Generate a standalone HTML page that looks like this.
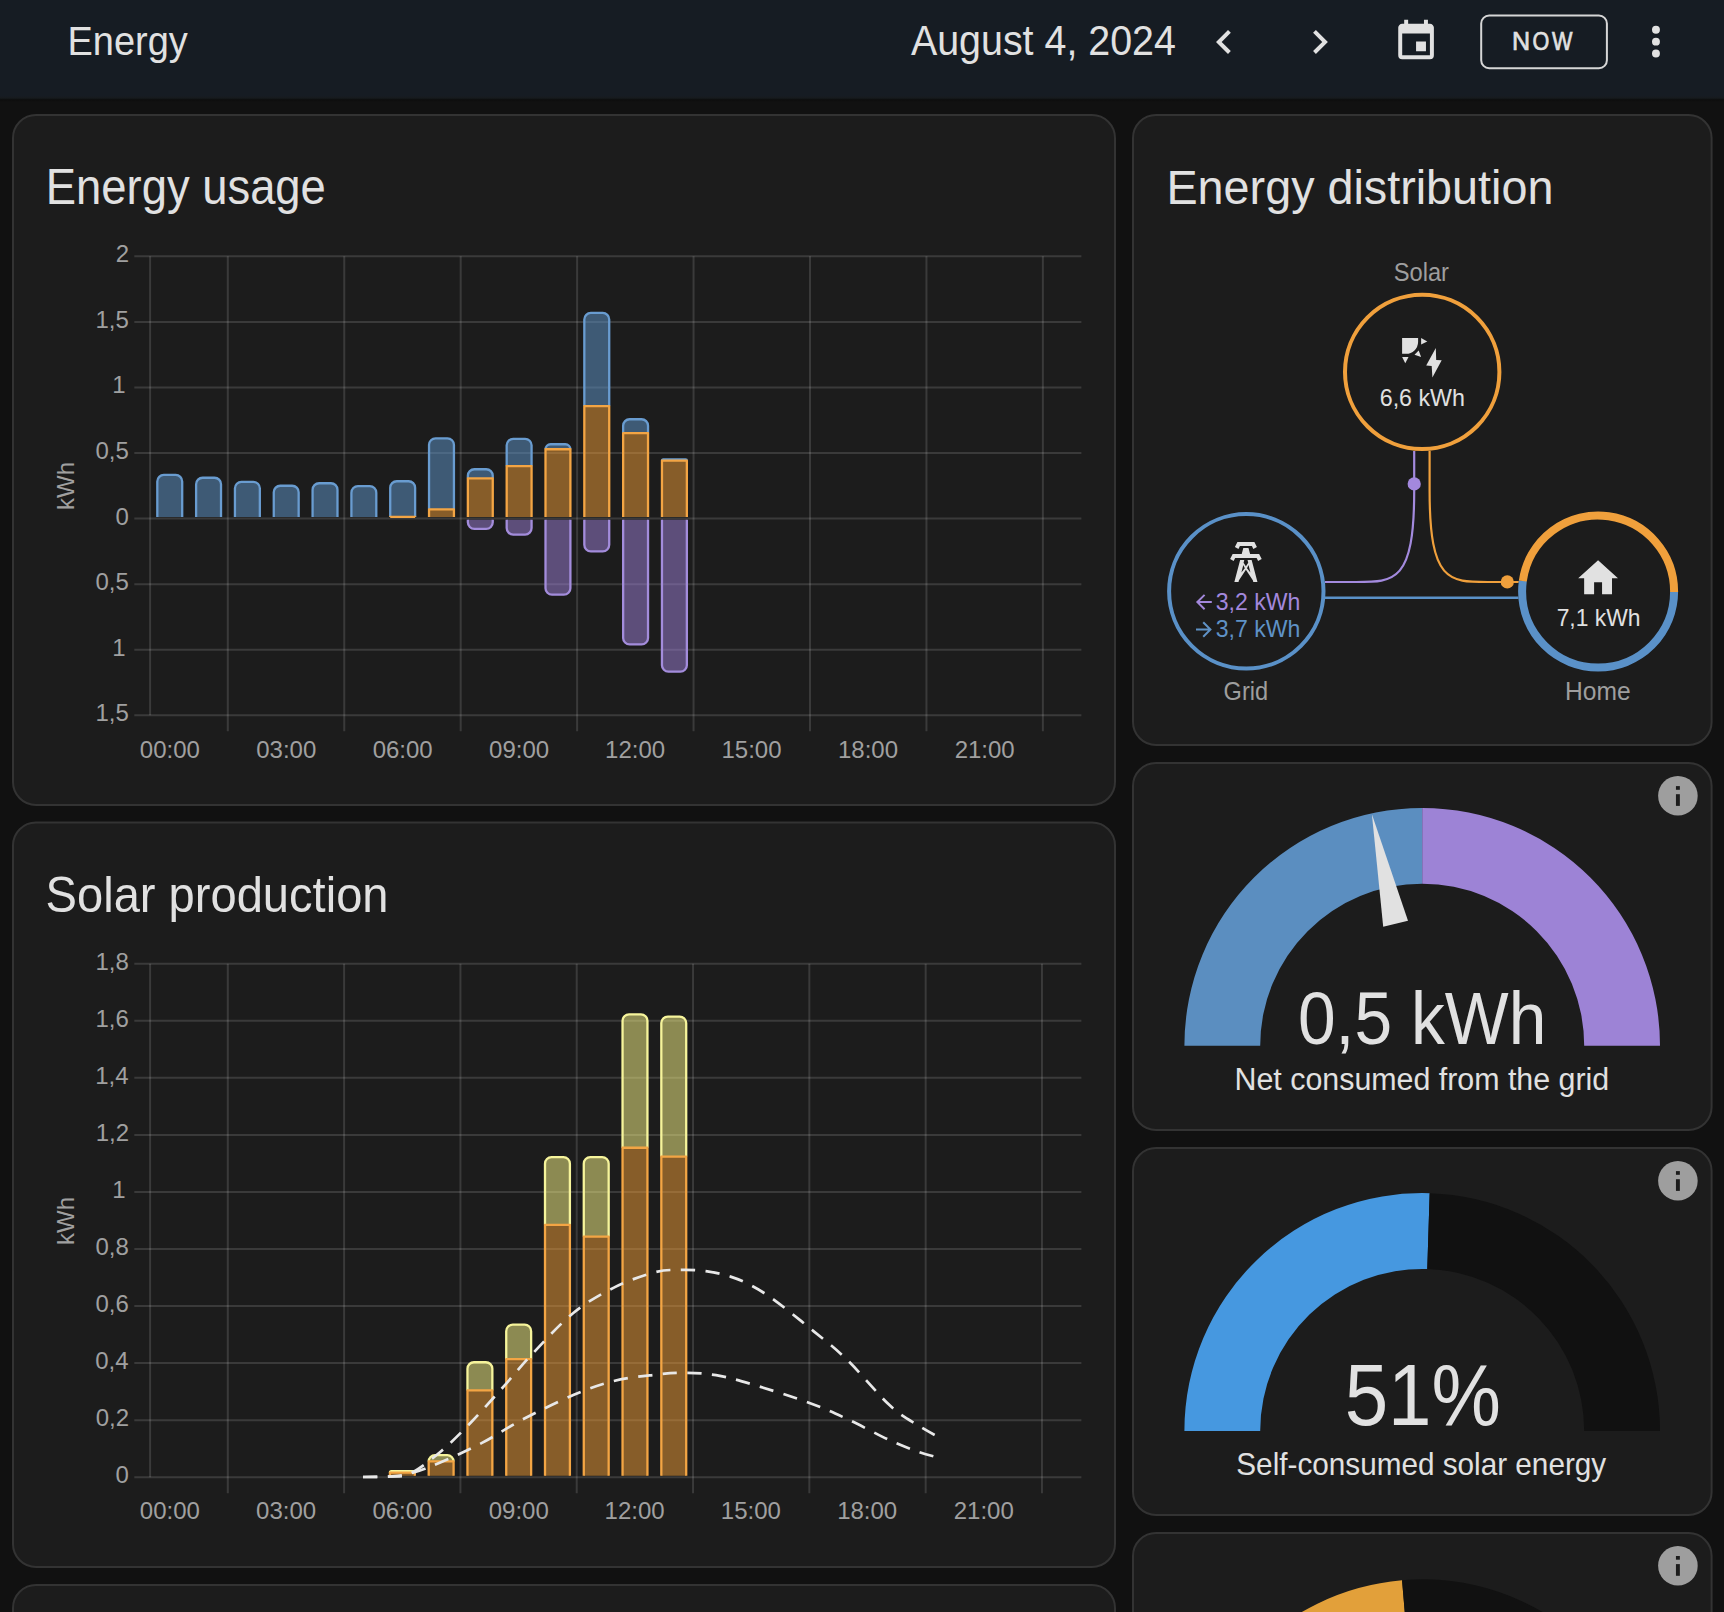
<!DOCTYPE html><html><head><meta charset="utf-8"><title>Energy</title><style>html,body{margin:0;padding:0;background:#111111;overflow:hidden;width:1724px;height:1612px}svg{display:block;font-family:'Liberation Sans', sans-serif}</style></head><body>
<svg width="1724" height="1612" viewBox="0 0 1724 1612">
<defs><linearGradient id="hsh" x1="0" y1="0" x2="0" y2="1"><stop offset="0" stop-color="#000" stop-opacity="0.25"/><stop offset="1" stop-color="#000" stop-opacity="0"/></linearGradient><linearGradient id="hgr" x1="0" y1="0" x2="0" y2="1"><stop offset="0" stop-color="#161c23"/><stop offset="0.5" stop-color="#171b1e"/><stop offset="1" stop-color="#0f1213"/></linearGradient></defs>
<rect x="0" y="0" width="1724" height="1612" fill="#111111"/>
<rect x="0" y="0" width="1724" height="96" fill="#161c23"/>
<rect x="0" y="96" width="1724" height="3.5" fill="url(#hgr)"/>
<rect x="0" y="99.5" width="1724" height="3" fill="url(#hsh)"/>
<g transform="translate(1200,17.9) scale(2)" fill="#e1e1e1"><path d="M15.41,16.58L10.83,12L15.41,7.41L14,6L8,12L14,18L15.41,16.58Z"/></g>
<g transform="translate(1295.9,17.9) scale(2)" fill="#e1e1e1"><path d="M8.59,16.58L13.17,12L8.59,7.41L10,6L16,12L10,18L8.59,16.58Z"/></g>
<g transform="translate(1392.3,17.7) scale(1.98)" fill="#e1e1e1"><path d="M19,19H5V8H19M16,1V3H8V1H6V3H5C3.89,3 3,3.89 3,5V19A2,2 0 0,0 5,21H19A2,2 0 0,0 21,19V5C21,3.89 20.1,3 19,3H18V1M17,12H12V17H17V12Z"/></g>
<rect x="1481.2" y="15.5" width="125.7" height="52.7" rx="8" ry="8" fill="none" stroke="#d6d6d6" stroke-width="2"/>
<g transform="translate(1632.2,17.9) scale(1.98)" fill="#e1e1e1"><path d="M12,16A2,2 0 0,1 14,18A2,2 0 0,1 12,20A2,2 0 0,1 10,18A2,2 0 0,1 12,16M12,10A2,2 0 0,1 14,12A2,2 0 0,1 12,14A2,2 0 0,1 10,12A2,2 0 0,1 12,10M12,4A2,2 0 0,1 14,6A2,2 0 0,1 12,8A2,2 0 0,1 10,6A2,2 0 0,1 12,4Z"/></g>
<rect x="13.0" y="115.0" width="1102.0" height="690.0" rx="23" ry="23" fill="#1c1c1c" stroke="#333333" stroke-width="2"/>
<rect x="13.0" y="822.5" width="1102.0" height="744.5" rx="23" ry="23" fill="#1c1c1c" stroke="#333333" stroke-width="2"/>
<rect x="13.0" y="1585.0" width="1102.0" height="115.0" rx="23" ry="23" fill="#1c1c1c" stroke="#333333" stroke-width="2"/>
<rect x="1133.0" y="115.0" width="578.6" height="630.0" rx="23" ry="23" fill="#1c1c1c" stroke="#333333" stroke-width="2"/>
<rect x="1133.0" y="763.0" width="578.6" height="367.0" rx="23" ry="23" fill="#1c1c1c" stroke="#333333" stroke-width="2"/>
<rect x="1133.0" y="1148.0" width="578.6" height="367.0" rx="23" ry="23" fill="#1c1c1c" stroke="#333333" stroke-width="2"/>
<rect x="1133.0" y="1533.0" width="578.6" height="167.0" rx="23" ry="23" fill="#1c1c1c" stroke="#333333" stroke-width="2"/>
<line x1="134.3" y1="256.32" x2="1081.4" y2="256.32" stroke="rgba(255,255,255,0.135)" stroke-width="2"/>
<line x1="134.3" y1="321.89" x2="1081.4" y2="321.89" stroke="rgba(255,255,255,0.135)" stroke-width="2"/>
<line x1="134.3" y1="387.46" x2="1081.4" y2="387.46" stroke="rgba(255,255,255,0.135)" stroke-width="2"/>
<line x1="134.3" y1="453.03" x2="1081.4" y2="453.03" stroke="rgba(255,255,255,0.135)" stroke-width="2"/>
<line x1="134.3" y1="518.60" x2="1081.4" y2="518.60" stroke="rgba(255,255,255,0.135)" stroke-width="2"/>
<line x1="134.3" y1="584.17" x2="1081.4" y2="584.17" stroke="rgba(255,255,255,0.135)" stroke-width="2"/>
<line x1="134.3" y1="649.74" x2="1081.4" y2="649.74" stroke="rgba(255,255,255,0.135)" stroke-width="2"/>
<line x1="134.3" y1="715.31" x2="1081.4" y2="715.31" stroke="rgba(255,255,255,0.135)" stroke-width="2"/>
<line x1="150.1" y1="256.32" x2="150.1" y2="715.31" stroke="rgba(255,255,255,0.135)" stroke-width="2"/>
<line x1="227.80" y1="256.32" x2="227.80" y2="731.31" stroke="rgba(255,255,255,0.135)" stroke-width="2"/>
<line x1="344.24" y1="256.32" x2="344.24" y2="731.31" stroke="rgba(255,255,255,0.135)" stroke-width="2"/>
<line x1="460.68" y1="256.32" x2="460.68" y2="731.31" stroke="rgba(255,255,255,0.135)" stroke-width="2"/>
<line x1="577.12" y1="256.32" x2="577.12" y2="731.31" stroke="rgba(255,255,255,0.135)" stroke-width="2"/>
<line x1="693.56" y1="256.32" x2="693.56" y2="731.31" stroke="rgba(255,255,255,0.135)" stroke-width="2"/>
<line x1="810.00" y1="256.32" x2="810.00" y2="731.31" stroke="rgba(255,255,255,0.135)" stroke-width="2"/>
<line x1="926.44" y1="256.32" x2="926.44" y2="731.31" stroke="rgba(255,255,255,0.135)" stroke-width="2"/>
<line x1="1042.88" y1="256.32" x2="1042.88" y2="731.31" stroke="rgba(255,255,255,0.135)" stroke-width="2"/>
<line x1="134.3" y1="1477.20" x2="1081.4" y2="1477.20" stroke="rgba(255,255,255,0.135)" stroke-width="2"/>
<line x1="134.3" y1="1420.15" x2="1081.4" y2="1420.15" stroke="rgba(255,255,255,0.135)" stroke-width="2"/>
<line x1="134.3" y1="1363.10" x2="1081.4" y2="1363.10" stroke="rgba(255,255,255,0.135)" stroke-width="2"/>
<line x1="134.3" y1="1306.05" x2="1081.4" y2="1306.05" stroke="rgba(255,255,255,0.135)" stroke-width="2"/>
<line x1="134.3" y1="1249.00" x2="1081.4" y2="1249.00" stroke="rgba(255,255,255,0.135)" stroke-width="2"/>
<line x1="134.3" y1="1191.95" x2="1081.4" y2="1191.95" stroke="rgba(255,255,255,0.135)" stroke-width="2"/>
<line x1="134.3" y1="1134.90" x2="1081.4" y2="1134.90" stroke="rgba(255,255,255,0.135)" stroke-width="2"/>
<line x1="134.3" y1="1077.85" x2="1081.4" y2="1077.85" stroke="rgba(255,255,255,0.135)" stroke-width="2"/>
<line x1="134.3" y1="1020.80" x2="1081.4" y2="1020.80" stroke="rgba(255,255,255,0.135)" stroke-width="2"/>
<line x1="134.3" y1="963.75" x2="1081.4" y2="963.75" stroke="rgba(255,255,255,0.135)" stroke-width="2"/>
<line x1="150.1" y1="963.75" x2="150.1" y2="1477.20" stroke="rgba(255,255,255,0.135)" stroke-width="2"/>
<line x1="227.80" y1="963.75" x2="227.80" y2="1493.20" stroke="rgba(255,255,255,0.135)" stroke-width="2"/>
<line x1="344.11" y1="963.75" x2="344.11" y2="1493.20" stroke="rgba(255,255,255,0.135)" stroke-width="2"/>
<line x1="460.42" y1="963.75" x2="460.42" y2="1493.20" stroke="rgba(255,255,255,0.135)" stroke-width="2"/>
<line x1="576.73" y1="963.75" x2="576.73" y2="1493.20" stroke="rgba(255,255,255,0.135)" stroke-width="2"/>
<line x1="693.04" y1="963.75" x2="693.04" y2="1493.20" stroke="rgba(255,255,255,0.135)" stroke-width="2"/>
<line x1="809.35" y1="963.75" x2="809.35" y2="1493.20" stroke="rgba(255,255,255,0.135)" stroke-width="2"/>
<line x1="925.66" y1="963.75" x2="925.66" y2="1493.20" stroke="rgba(255,255,255,0.135)" stroke-width="2"/>
<line x1="1041.97" y1="963.75" x2="1041.97" y2="1493.20" stroke="rgba(255,255,255,0.135)" stroke-width="2"/>
<path d="M157.30,517.00 V481.45 A6.50,6.50 0 0 1 163.80,474.95 H175.70 A6.50,6.50 0 0 1 182.20,481.45 V517.00Z" fill="rgba(91,142,192,0.55)" stroke="none"/>
<path d="M157.30,517.00 V481.45 A6.50,6.50 0 0 1 163.80,474.95 H175.70 A6.50,6.50 0 0 1 182.20,481.45 V517.00" fill="none" stroke="#699cd0" stroke-width="2.3" stroke-linejoin="round"/>
<path d="M196.12,517.00 V484.25 A6.50,6.50 0 0 1 202.62,477.75 H214.52 A6.50,6.50 0 0 1 221.02,484.25 V517.00Z" fill="rgba(91,142,192,0.55)" stroke="none"/>
<path d="M196.12,517.00 V484.25 A6.50,6.50 0 0 1 202.62,477.75 H214.52 A6.50,6.50 0 0 1 221.02,484.25 V517.00" fill="none" stroke="#699cd0" stroke-width="2.3" stroke-linejoin="round"/>
<path d="M234.94,517.00 V488.35 A6.50,6.50 0 0 1 241.44,481.85 H253.34 A6.50,6.50 0 0 1 259.84,488.35 V517.00Z" fill="rgba(91,142,192,0.55)" stroke="none"/>
<path d="M234.94,517.00 V488.35 A6.50,6.50 0 0 1 241.44,481.85 H253.34 A6.50,6.50 0 0 1 259.84,488.35 V517.00" fill="none" stroke="#699cd0" stroke-width="2.3" stroke-linejoin="round"/>
<path d="M273.76,517.00 V492.25 A6.50,6.50 0 0 1 280.26,485.75 H292.16 A6.50,6.50 0 0 1 298.66,492.25 V517.00Z" fill="rgba(91,142,192,0.55)" stroke="none"/>
<path d="M273.76,517.00 V492.25 A6.50,6.50 0 0 1 280.26,485.75 H292.16 A6.50,6.50 0 0 1 298.66,492.25 V517.00" fill="none" stroke="#699cd0" stroke-width="2.3" stroke-linejoin="round"/>
<path d="M312.58,517.00 V489.75 A6.50,6.50 0 0 1 319.08,483.25 H330.98 A6.50,6.50 0 0 1 337.48,489.75 V517.00Z" fill="rgba(91,142,192,0.55)" stroke="none"/>
<path d="M312.58,517.00 V489.75 A6.50,6.50 0 0 1 319.08,483.25 H330.98 A6.50,6.50 0 0 1 337.48,489.75 V517.00" fill="none" stroke="#699cd0" stroke-width="2.3" stroke-linejoin="round"/>
<path d="M351.40,517.00 V492.65 A6.50,6.50 0 0 1 357.90,486.15 H369.80 A6.50,6.50 0 0 1 376.30,492.65 V517.00Z" fill="rgba(91,142,192,0.55)" stroke="none"/>
<path d="M351.40,517.00 V492.65 A6.50,6.50 0 0 1 357.90,486.15 H369.80 A6.50,6.50 0 0 1 376.30,492.65 V517.00" fill="none" stroke="#699cd0" stroke-width="2.3" stroke-linejoin="round"/>
<path d="M390.22,516.95 V487.75 A6.50,6.50 0 0 1 396.72,481.25 H408.62 A6.50,6.50 0 0 1 415.12,487.75 V516.95Z" fill="rgba(91,142,192,0.55)" stroke="none"/>
<path d="M390.22,516.95 V487.75 A6.50,6.50 0 0 1 396.72,481.25 H408.62 A6.50,6.50 0 0 1 415.12,487.75 V516.95" fill="none" stroke="#699cd0" stroke-width="2.3" stroke-linejoin="round"/>
<path d="M390.22,517.00 V516.95 H415.12 V517.00Z" fill="rgba(242,157,53,0.50)" stroke="none"/>
<path d="M390.22,517.00 V516.95 H415.12 V517.00" fill="none" stroke="#f3a544" stroke-width="2.3" stroke-linejoin="round"/>
<path d="M429.04,509.35 V444.85 A6.50,6.50 0 0 1 435.54,438.35 H447.44 A6.50,6.50 0 0 1 453.94,444.85 V509.35Z" fill="rgba(91,142,192,0.55)" stroke="none"/>
<path d="M429.04,509.35 V444.85 A6.50,6.50 0 0 1 435.54,438.35 H447.44 A6.50,6.50 0 0 1 453.94,444.85 V509.35" fill="none" stroke="#699cd0" stroke-width="2.3" stroke-linejoin="round"/>
<path d="M429.04,517.00 V509.35 H453.94 V517.00Z" fill="rgba(242,157,53,0.50)" stroke="none"/>
<path d="M429.04,517.00 V509.35 H453.94 V517.00" fill="none" stroke="#f3a544" stroke-width="2.3" stroke-linejoin="round"/>
<path d="M467.86,478.35 V475.75 A6.50,6.50 0 0 1 474.36,469.25 H486.26 A6.50,6.50 0 0 1 492.76,475.75 V478.35Z" fill="rgba(91,142,192,0.55)" stroke="none"/>
<path d="M467.86,478.35 V475.75 A6.50,6.50 0 0 1 474.36,469.25 H486.26 A6.50,6.50 0 0 1 492.76,475.75 V478.35" fill="none" stroke="#699cd0" stroke-width="2.3" stroke-linejoin="round"/>
<path d="M467.86,517.00 V478.35 H492.76 V517.00Z" fill="rgba(242,157,53,0.50)" stroke="none"/>
<path d="M467.86,517.00 V478.35 H492.76 V517.00" fill="none" stroke="#f3a544" stroke-width="2.3" stroke-linejoin="round"/>
<path d="M467.86,519.80 V522.35 A6.50,6.50 0 0 0 474.36,528.85 H486.26 A6.50,6.50 0 0 0 492.76,522.35 V519.80Z" fill="rgba(157,128,216,0.50)"/>
<path d="M467.86,519.80 V522.35 A6.50,6.50 0 0 0 474.36,528.85 H486.26 A6.50,6.50 0 0 0 492.76,522.35 V519.80" fill="none" stroke="#a38cdb" stroke-width="2.3"/>
<path d="M506.68,466.15 V445.35 A6.50,6.50 0 0 1 513.18,438.85 H525.08 A6.50,6.50 0 0 1 531.58,445.35 V466.15Z" fill="rgba(91,142,192,0.55)" stroke="none"/>
<path d="M506.68,466.15 V445.35 A6.50,6.50 0 0 1 513.18,438.85 H525.08 A6.50,6.50 0 0 1 531.58,445.35 V466.15" fill="none" stroke="#699cd0" stroke-width="2.3" stroke-linejoin="round"/>
<path d="M506.68,517.00 V466.15 H531.58 V517.00Z" fill="rgba(242,157,53,0.50)" stroke="none"/>
<path d="M506.68,517.00 V466.15 H531.58 V517.00" fill="none" stroke="#f3a544" stroke-width="2.3" stroke-linejoin="round"/>
<path d="M506.68,519.80 V528.05 A6.50,6.50 0 0 0 513.18,534.55 H525.08 A6.50,6.50 0 0 0 531.58,528.05 V519.80Z" fill="rgba(157,128,216,0.50)"/>
<path d="M506.68,519.80 V528.05 A6.50,6.50 0 0 0 513.18,534.55 H525.08 A6.50,6.50 0 0 0 531.58,528.05 V519.80" fill="none" stroke="#a38cdb" stroke-width="2.3"/>
<path d="M545.50,449.25 V449.25 A5.00,5.00 0 0 1 550.50,444.25 H565.40 A5.00,5.00 0 0 1 570.40,449.25 V449.25Z" fill="rgba(91,142,192,0.55)" stroke="none"/>
<path d="M545.50,449.25 V449.25 A5.00,5.00 0 0 1 550.50,444.25 H565.40 A5.00,5.00 0 0 1 570.40,449.25 V449.25" fill="none" stroke="#699cd0" stroke-width="2.3" stroke-linejoin="round"/>
<path d="M545.50,517.00 V449.25 H570.40 V517.00Z" fill="rgba(242,157,53,0.50)" stroke="none"/>
<path d="M545.50,517.00 V449.25 H570.40 V517.00" fill="none" stroke="#f3a544" stroke-width="2.3" stroke-linejoin="round"/>
<path d="M545.50,519.80 V588.15 A6.50,6.50 0 0 0 552.00,594.65 H563.90 A6.50,6.50 0 0 0 570.40,588.15 V519.80Z" fill="rgba(157,128,216,0.50)"/>
<path d="M545.50,519.80 V588.15 A6.50,6.50 0 0 0 552.00,594.65 H563.90 A6.50,6.50 0 0 0 570.40,588.15 V519.80" fill="none" stroke="#a38cdb" stroke-width="2.3"/>
<path d="M584.32,406.05 V319.45 A6.50,6.50 0 0 1 590.82,312.95 H602.72 A6.50,6.50 0 0 1 609.22,319.45 V406.05Z" fill="rgba(91,142,192,0.55)" stroke="none"/>
<path d="M584.32,406.05 V319.45 A6.50,6.50 0 0 1 590.82,312.95 H602.72 A6.50,6.50 0 0 1 609.22,319.45 V406.05" fill="none" stroke="#699cd0" stroke-width="2.3" stroke-linejoin="round"/>
<path d="M584.32,517.00 V406.05 H609.22 V517.00Z" fill="rgba(242,157,53,0.50)" stroke="none"/>
<path d="M584.32,517.00 V406.05 H609.22 V517.00" fill="none" stroke="#f3a544" stroke-width="2.3" stroke-linejoin="round"/>
<path d="M584.32,519.80 V544.85 A6.50,6.50 0 0 0 590.82,551.35 H602.72 A6.50,6.50 0 0 0 609.22,544.85 V519.80Z" fill="rgba(157,128,216,0.50)"/>
<path d="M584.32,519.80 V544.85 A6.50,6.50 0 0 0 590.82,551.35 H602.72 A6.50,6.50 0 0 0 609.22,544.85 V519.80" fill="none" stroke="#a38cdb" stroke-width="2.3"/>
<path d="M623.14,433.15 V425.75 A6.50,6.50 0 0 1 629.64,419.25 H641.54 A6.50,6.50 0 0 1 648.04,425.75 V433.15Z" fill="rgba(91,142,192,0.55)" stroke="none"/>
<path d="M623.14,433.15 V425.75 A6.50,6.50 0 0 1 629.64,419.25 H641.54 A6.50,6.50 0 0 1 648.04,425.75 V433.15" fill="none" stroke="#699cd0" stroke-width="2.3" stroke-linejoin="round"/>
<path d="M623.14,517.00 V433.15 H648.04 V517.00Z" fill="rgba(242,157,53,0.50)" stroke="none"/>
<path d="M623.14,517.00 V433.15 H648.04 V517.00" fill="none" stroke="#f3a544" stroke-width="2.3" stroke-linejoin="round"/>
<path d="M623.14,519.80 V637.95 A6.50,6.50 0 0 0 629.64,644.45 H641.54 A6.50,6.50 0 0 0 648.04,637.95 V519.80Z" fill="rgba(157,128,216,0.50)"/>
<path d="M623.14,519.80 V637.95 A6.50,6.50 0 0 0 629.64,644.45 H641.54 A6.50,6.50 0 0 0 648.04,637.95 V519.80" fill="none" stroke="#a38cdb" stroke-width="2.3"/>
<path d="M661.96,460.65 V460.65 A1.20,1.20 0 0 1 663.16,459.45 H685.66 A1.20,1.20 0 0 1 686.86,460.65 V460.65Z" fill="rgba(91,142,192,0.55)" stroke="none"/>
<path d="M661.96,460.65 V460.65 A1.20,1.20 0 0 1 663.16,459.45 H685.66 A1.20,1.20 0 0 1 686.86,460.65 V460.65" fill="none" stroke="#699cd0" stroke-width="2.3" stroke-linejoin="round"/>
<path d="M661.96,517.00 V460.65 H686.86 V517.00Z" fill="rgba(242,157,53,0.50)" stroke="none"/>
<path d="M661.96,517.00 V460.65 H686.86 V517.00" fill="none" stroke="#f3a544" stroke-width="2.3" stroke-linejoin="round"/>
<path d="M661.96,519.80 V665.15 A6.50,6.50 0 0 0 668.46,671.65 H680.36 A6.50,6.50 0 0 0 686.86,665.15 V519.80Z" fill="rgba(157,128,216,0.50)"/>
<path d="M661.96,519.80 V665.15 A6.50,6.50 0 0 0 668.46,671.65 H680.36 A6.50,6.50 0 0 0 686.86,665.15 V519.80" fill="none" stroke="#a38cdb" stroke-width="2.3"/>
<path d="M389.92,1472.65 V1472.65 A1.50,1.50 0 0 1 391.42,1471.15 H413.32 A1.50,1.50 0 0 1 414.82,1472.65 V1472.65Z" fill="rgba(252,248,136,0.50)" stroke="none"/>
<path d="M389.92,1472.65 V1472.65 A1.50,1.50 0 0 1 391.42,1471.15 H413.32 A1.50,1.50 0 0 1 414.82,1472.65 V1472.65" fill="none" stroke="#f6f49b" stroke-width="2.3" stroke-linejoin="round"/>
<path d="M389.92,1475.80 V1472.65 H414.82 V1475.80Z" fill="rgba(242,157,53,0.50)" stroke="none"/>
<path d="M389.92,1475.80 V1472.65 H414.82 V1475.80" fill="none" stroke="#f3a544" stroke-width="2.3" stroke-linejoin="round"/>
<path d="M428.69,1461.45 V1461.45 A6.30,6.30 0 0 1 434.99,1455.15 H447.29 A6.30,6.30 0 0 1 453.59,1461.45 V1461.45Z" fill="rgba(252,248,136,0.50)" stroke="none"/>
<path d="M428.69,1461.45 V1461.45 A6.30,6.30 0 0 1 434.99,1455.15 H447.29 A6.30,6.30 0 0 1 453.59,1461.45 V1461.45" fill="none" stroke="#f6f49b" stroke-width="2.3" stroke-linejoin="round"/>
<path d="M428.69,1475.80 V1461.45 H453.59 V1475.80Z" fill="rgba(242,157,53,0.50)" stroke="none"/>
<path d="M428.69,1475.80 V1461.45 H453.59 V1475.80" fill="none" stroke="#f3a544" stroke-width="2.3" stroke-linejoin="round"/>
<path d="M467.46,1390.45 V1368.75 A6.50,6.50 0 0 1 473.96,1362.25 H485.86 A6.50,6.50 0 0 1 492.36,1368.75 V1390.45Z" fill="rgba(252,248,136,0.50)" stroke="none"/>
<path d="M467.46,1390.45 V1368.75 A6.50,6.50 0 0 1 473.96,1362.25 H485.86 A6.50,6.50 0 0 1 492.36,1368.75 V1390.45" fill="none" stroke="#f6f49b" stroke-width="2.3" stroke-linejoin="round"/>
<path d="M467.46,1475.80 V1390.45 H492.36 V1475.80Z" fill="rgba(242,157,53,0.50)" stroke="none"/>
<path d="M467.46,1475.80 V1390.45 H492.36 V1475.80" fill="none" stroke="#f3a544" stroke-width="2.3" stroke-linejoin="round"/>
<path d="M506.23,1359.15 V1331.15 A6.50,6.50 0 0 1 512.73,1324.65 H524.63 A6.50,6.50 0 0 1 531.13,1331.15 V1359.15Z" fill="rgba(252,248,136,0.50)" stroke="none"/>
<path d="M506.23,1359.15 V1331.15 A6.50,6.50 0 0 1 512.73,1324.65 H524.63 A6.50,6.50 0 0 1 531.13,1331.15 V1359.15" fill="none" stroke="#f6f49b" stroke-width="2.3" stroke-linejoin="round"/>
<path d="M506.23,1475.80 V1359.15 H531.13 V1475.80Z" fill="rgba(242,157,53,0.50)" stroke="none"/>
<path d="M506.23,1475.80 V1359.15 H531.13 V1475.80" fill="none" stroke="#f3a544" stroke-width="2.3" stroke-linejoin="round"/>
<path d="M545.00,1224.85 V1163.65 A6.50,6.50 0 0 1 551.50,1157.15 H563.40 A6.50,6.50 0 0 1 569.90,1163.65 V1224.85Z" fill="rgba(252,248,136,0.50)" stroke="none"/>
<path d="M545.00,1224.85 V1163.65 A6.50,6.50 0 0 1 551.50,1157.15 H563.40 A6.50,6.50 0 0 1 569.90,1163.65 V1224.85" fill="none" stroke="#f6f49b" stroke-width="2.3" stroke-linejoin="round"/>
<path d="M545.00,1475.80 V1224.85 H569.90 V1475.80Z" fill="rgba(242,157,53,0.50)" stroke="none"/>
<path d="M545.00,1475.80 V1224.85 H569.90 V1475.80" fill="none" stroke="#f3a544" stroke-width="2.3" stroke-linejoin="round"/>
<path d="M583.77,1236.55 V1163.65 A6.50,6.50 0 0 1 590.27,1157.15 H602.17 A6.50,6.50 0 0 1 608.67,1163.65 V1236.55Z" fill="rgba(252,248,136,0.50)" stroke="none"/>
<path d="M583.77,1236.55 V1163.65 A6.50,6.50 0 0 1 590.27,1157.15 H602.17 A6.50,6.50 0 0 1 608.67,1163.65 V1236.55" fill="none" stroke="#f6f49b" stroke-width="2.3" stroke-linejoin="round"/>
<path d="M583.77,1475.80 V1236.55 H608.67 V1475.80Z" fill="rgba(242,157,53,0.50)" stroke="none"/>
<path d="M583.77,1475.80 V1236.55 H608.67 V1475.80" fill="none" stroke="#f3a544" stroke-width="2.3" stroke-linejoin="round"/>
<path d="M622.54,1147.75 V1020.85 A6.50,6.50 0 0 1 629.04,1014.35 H640.94 A6.50,6.50 0 0 1 647.44,1020.85 V1147.75Z" fill="rgba(252,248,136,0.50)" stroke="none"/>
<path d="M622.54,1147.75 V1020.85 A6.50,6.50 0 0 1 629.04,1014.35 H640.94 A6.50,6.50 0 0 1 647.44,1020.85 V1147.75" fill="none" stroke="#f6f49b" stroke-width="2.3" stroke-linejoin="round"/>
<path d="M622.54,1475.80 V1147.75 H647.44 V1475.80Z" fill="rgba(242,157,53,0.50)" stroke="none"/>
<path d="M622.54,1475.80 V1147.75 H647.44 V1475.80" fill="none" stroke="#f3a544" stroke-width="2.3" stroke-linejoin="round"/>
<path d="M661.31,1156.55 V1023.05 A6.50,6.50 0 0 1 667.81,1016.55 H679.71 A6.50,6.50 0 0 1 686.21,1023.05 V1156.55Z" fill="rgba(252,248,136,0.50)" stroke="none"/>
<path d="M661.31,1156.55 V1023.05 A6.50,6.50 0 0 1 667.81,1016.55 H679.71 A6.50,6.50 0 0 1 686.21,1023.05 V1156.55" fill="none" stroke="#f6f49b" stroke-width="2.3" stroke-linejoin="round"/>
<path d="M661.31,1475.80 V1156.55 H686.21 V1475.80Z" fill="rgba(242,157,53,0.50)" stroke="none"/>
<path d="M661.31,1475.80 V1156.55 H686.21 V1475.80" fill="none" stroke="#f3a544" stroke-width="2.3" stroke-linejoin="round"/>
<path d="M363.00,1477.00 C367.50,1476.92 382.02,1477.12 390.00,1476.50 C397.98,1475.88 402.33,1477.55 410.90,1473.30 C419.47,1469.05 431.25,1459.63 441.40,1451.00 C451.55,1442.37 461.65,1432.00 471.80,1421.50 C481.95,1411.00 492.15,1399.33 502.30,1388.00 C512.45,1376.67 520.87,1366.00 532.70,1353.50 C544.53,1341.00 559.77,1323.98 573.30,1313.00 C586.83,1302.02 600.37,1294.38 613.90,1287.60 C627.43,1280.82 643.28,1275.25 654.50,1272.30 C665.72,1269.35 672.40,1270.07 681.20,1269.90 C690.00,1269.73 699.08,1270.18 707.30,1271.30 C715.52,1272.42 723.25,1274.27 730.50,1276.60 C737.75,1278.93 743.55,1281.43 750.80,1285.30 C758.05,1289.17 764.33,1292.80 774.00,1299.80 C783.67,1306.80 796.72,1317.40 808.80,1327.30 C820.88,1337.20 832.97,1346.15 846.50,1359.20 C860.03,1372.25 877.92,1394.48 890.00,1405.60 C902.08,1416.72 910.78,1420.58 919.00,1425.90 C927.22,1431.22 935.92,1435.57 939.30,1437.50" fill="none" stroke="#e8e8e8" stroke-width="2.7" stroke-dasharray="14.3,10.4"/>
<path d="M363.00,1477.00 C367.50,1476.92 382.02,1477.12 390.00,1476.50 C397.98,1475.88 402.33,1475.72 410.90,1473.30 C419.47,1470.88 429.55,1467.07 441.40,1462.00 C453.25,1456.93 468.47,1449.98 482.00,1442.90 C495.53,1435.82 507.38,1427.47 522.60,1419.50 C537.82,1411.53 558.08,1401.52 573.30,1395.10 C588.52,1388.68 600.37,1384.38 613.90,1381.00 C627.43,1377.62 642.80,1376.17 654.50,1374.80 C666.20,1373.43 673.85,1372.73 684.10,1372.80 C694.35,1372.87 704.88,1373.35 716.00,1375.20 C727.12,1377.05 735.33,1379.32 750.80,1383.90 C766.27,1388.48 792.85,1396.90 808.80,1402.70 C824.75,1408.50 832.97,1412.42 846.50,1418.70 C860.03,1424.98 877.92,1434.85 890.00,1440.40 C902.08,1445.95 910.78,1449.10 919.00,1452.00 C927.22,1454.90 935.92,1456.83 939.30,1457.80" fill="none" stroke="#e8e8e8" stroke-width="2.7" stroke-dasharray="14.3,10.4"/>
<path d="M1414.2,451 V491.1 C1414.2,582 1394.8,582 1356,582 H1325" fill="none" stroke="#a38ade" stroke-width="2.2"/>
<path d="M1429.6,451 V491.1 C1429.6,582 1449,582 1487.8,582 H1519" fill="none" stroke="#f0a03c" stroke-width="2.2"/>
<path d="M1325,597.7 H1519" fill="none" stroke="#5a91c8" stroke-width="2.6"/>
<circle cx="1414.2" cy="483.9" r="6.6" fill="#a388de"/>
<circle cx="1507.3" cy="581.9" r="6.6" fill="#f0a03c"/>
<circle cx="1422.2" cy="371.9" r="77.2" fill="#1c1c1c" stroke="#f0a03c" stroke-width="4"/>
<circle cx="1246.3" cy="591.3" r="77.2" fill="#1c1c1c" stroke="#5a91c8" stroke-width="4"/>
<circle cx="1598.1" cy="591.5" r="80.0" fill="#1c1c1c"/>
<circle cx="1598.1" cy="591.5" r="76.0" fill="none" stroke="#5a91c8" stroke-width="8" stroke-dasharray="249.27 477.52" transform="rotate(0 1598.1 591.5)"/>
<circle cx="1598.1" cy="591.5" r="76.0" fill="none" stroke="#f0a03c" stroke-width="8" stroke-dasharray="228.26 477.52" transform="rotate(187.92 1598.1 591.5)"/>
<g fill="#e1e1e1">
<path d="M1402.1,338 H1418.1 V342 A12,12 0 0 1 1406,353.8 H1402.1 Z"/>
<path d="M1421.1,338 L1427.3,341.4 L1421.1,344.6 Z"/>
<path d="M1402.1,357 L1408.5,357 L1405.3,363.3 Z"/>
<path d="M1414.5,354.8 L1418.7,350.6 L1421.1,357 Z"/>
<path d="M1435.8,348 L1426.2,365.5 L1431.7,366.1 L1432.4,377.4 L1441.7,360.3 L1436.2,359.9 Z"/>
</g>
<g transform="translate(1221.9,538) scale(2)" fill="#e1e1e1"><path d="M8.28,5.45L6.5,4.55L7.76,2H16.24L17.5,4.55L15.72,5.44L15,4H9L8.28,5.45M18.62,8H14.09L13.3,5H10.7L9.91,8H5.38L4.1,10.55L5.89,11.44L6.62,10H17.38L18.11,11.45L19.9,10.56L18.62,8M17.77,22H15.7L15.46,21.1L12,15.9L8.54,21.1L8.3,22H6.23L9.12,11H11.19L10.83,12.35L12,14.1L13.16,12.35L12.81,11H14.88L17.77,22M11.45,15.1L10.7,13.5L9.75,17.2L11.45,15.1M14.25,17.2L13.3,13.5L12.55,15.1L14.25,17.2Z"/></g>
<g transform="translate(1191.8,590.1)" fill="#a388dc"><path d="M20,11V13H8L13.5,18.5L12.08,19.92L4.16,12L12.08,4.08L13.5,5.5L8,11H20Z"/></g>
<g transform="translate(1192,617.5)" fill="#5f92c6"><path d="M4,11V13H16L10.5,18.5L11.92,19.92L19.84,12L11.92,4.08L10.5,5.5L16,11H4Z"/></g>
<g transform="translate(1574.2,554.4) scale(1.99)" fill="#e1e1e1"><path d="M10,20V14H14V20H19V12H22L12,3L2,12H5V20H10Z"/></g>
<path d="M1184.40,1045.70 A237.80,237.80 0 0 1 1422.20,807.90 L1422.20,883.70 A162.00,162.00 0 0 0 1260.20,1045.70 Z" fill="#5b8ec0"/>
<path d="M1422.20,807.90 A237.80,237.80 0 0 1 1660.00,1045.70 L1584.20,1045.70 A162.00,162.00 0 0 0 1422.20,883.70 Z" fill="#9d83d6"/>
<path d="M1371.9,814.3 L1383.2,926.8 L1408,920.8 Z" fill="#e1e1e1"/>
<path d="M1184.40,1430.90 A237.80,237.80 0 0 1 1429.67,1193.22 L1427.29,1268.98 A162.00,162.00 0 0 0 1260.20,1430.90 Z" fill="#4698e0"/>
<path d="M1429.67,1193.22 A237.80,237.80 0 0 1 1660.00,1430.90 L1584.20,1430.90 A162.00,162.00 0 0 0 1427.29,1268.98 Z" fill="#111111"/>
<path d="M1184.40,1817.10 A237.80,237.80 0 0 1 1402.05,1580.15 L1408.48,1655.68 A162.00,162.00 0 0 0 1260.20,1817.10 Z" fill="#e2a03a"/>
<path d="M1402.05,1580.15 A237.80,237.80 0 0 1 1660.00,1817.10 L1584.20,1817.10 A162.00,162.00 0 0 0 1408.48,1655.68 Z" fill="#111111"/>
<circle cx="1677.9" cy="795.8" r="19.8" fill="#9e9e9e"/>
<rect x="1675.95" y="794.20" width="3.9" height="11.7" fill="#1c1c1c"/>
<rect x="1675.95" y="786.10" width="3.9" height="3.7" fill="#1c1c1c"/>
<circle cx="1677.9" cy="1180.8" r="19.8" fill="#9e9e9e"/>
<rect x="1675.95" y="1179.20" width="3.9" height="11.7" fill="#1c1c1c"/>
<rect x="1675.95" y="1171.10" width="3.9" height="3.7" fill="#1c1c1c"/>
<circle cx="1677.9" cy="1565.7" r="19.8" fill="#9e9e9e"/>
<rect x="1675.95" y="1564.10" width="3.9" height="11.7" fill="#1c1c1c"/>
<rect x="1675.95" y="1556.00" width="3.9" height="3.7" fill="#1c1c1c"/>
<text x="0" y="0" font-size="24" fill="#a0a0a0" text-anchor="middle" transform="translate(74.2,485.9) rotate(-90)">kWh</text>
<text x="0" y="0" font-size="24" fill="#a0a0a0" text-anchor="middle" transform="translate(74.2,1220.9) rotate(-90)">kWh</text>
<text x="67.56" y="55.10" font-size="41.57" fill="#e1e1e1" textLength="120.24" lengthAdjust="spacingAndGlyphs">Energy</text>
<text x="910.90" y="55.40" font-size="42.15" fill="#e1e1e1" textLength="265.03" lengthAdjust="spacingAndGlyphs">August 4, 2024</text>
<text x="1512.09" y="50.00" font-size="25.73" fill="#e1e1e1" textLength="18.12" lengthAdjust="spacingAndGlyphs" stroke="#e1e1e1" stroke-width="0.7">N</text>
<text x="1532.54" y="50.30" font-size="26.45" fill="#e1e1e1" textLength="16.80" lengthAdjust="spacingAndGlyphs" stroke="#e1e1e1" stroke-width="0.7">O</text>
<text x="1551.90" y="50.00" font-size="25.73" fill="#e1e1e1" textLength="20.47" lengthAdjust="spacingAndGlyphs" stroke="#e1e1e1" stroke-width="0.7">W</text>
<text x="45.87" y="204.20" font-size="49.71" fill="#e1e1e1" textLength="279.97" lengthAdjust="spacingAndGlyphs">Energy usage</text>
<text x="45.62" y="912.20" font-size="50.00" fill="#e1e1e1" textLength="342.93" lengthAdjust="spacingAndGlyphs">Solar production</text>
<text x="1166.46" y="203.70" font-size="48.84" fill="#e1e1e1" textLength="386.96" lengthAdjust="spacingAndGlyphs">Energy distribution</text>
<text x="1393.65" y="280.60" font-size="25.44" fill="#9e9e9e" textLength="55.36" lengthAdjust="spacingAndGlyphs">Solar</text>
<text x="1379.74" y="405.70" font-size="24.27" fill="#e1e1e1" textLength="85.16" lengthAdjust="spacingAndGlyphs">6,6 kWh</text>
<text x="1215.71" y="609.60" font-size="23.69" fill="#a388dc" textLength="84.59" lengthAdjust="spacingAndGlyphs">3,2 kWh</text>
<text x="1215.71" y="637.40" font-size="23.69" fill="#5f92c6" textLength="84.59" lengthAdjust="spacingAndGlyphs">3,7 kWh</text>
<text x="1223.62" y="700.20" font-size="25.00" fill="#9e9e9e" textLength="44.50" lengthAdjust="spacingAndGlyphs">Grid</text>
<text x="1564.93" y="700.20" font-size="25.00" fill="#9e9e9e" textLength="65.66" lengthAdjust="spacingAndGlyphs">Home</text>
<text x="1556.66" y="625.50" font-size="23.69" fill="#e1e1e1" textLength="83.83" lengthAdjust="spacingAndGlyphs">7,1 kWh</text>
<text x="1297.97" y="1043.80" font-size="74.13" fill="#e1e1e1" textLength="248.33" lengthAdjust="spacingAndGlyphs">0,5 kWh</text>
<text x="1234.57" y="1089.80" font-size="30.81" fill="#e1e1e1" textLength="374.63" lengthAdjust="spacingAndGlyphs">Net consumed from the grid</text>
<text x="1344.68" y="1424.50" font-size="87.65" fill="#e1e1e1" textLength="156.30" lengthAdjust="spacingAndGlyphs">51%</text>
<text x="1236.31" y="1475.10" font-size="31.11" fill="#e1e1e1" textLength="369.89" lengthAdjust="spacingAndGlyphs">Self-consumed solar energy</text>
<text x="115.66" y="262.32" font-size="24.00" fill="#a0a0a0">2</text>
<text x="95.40" y="327.89" font-size="24.00" fill="#a0a0a0">1,5</text>
<text x="112.36" y="393.46" font-size="24.00" fill="#a0a0a0">1</text>
<text x="95.40" y="459.03" font-size="24.00" fill="#a0a0a0">0,5</text>
<text x="115.42" y="524.60" font-size="24.00" fill="#a0a0a0">0</text>
<text x="95.40" y="590.17" font-size="24.00" fill="#a0a0a0">0,5</text>
<text x="112.36" y="655.74" font-size="24.00" fill="#a0a0a0">1</text>
<text x="95.40" y="721.31" font-size="24.00" fill="#a0a0a0">1,5</text>
<text x="139.79" y="757.70" font-size="24.00" fill="#a0a0a0">00:00</text>
<text x="256.23" y="757.70" font-size="24.00" fill="#a0a0a0">03:00</text>
<text x="372.67" y="757.70" font-size="24.00" fill="#a0a0a0">06:00</text>
<text x="489.11" y="757.70" font-size="24.00" fill="#a0a0a0">09:00</text>
<text x="605.07" y="757.70" font-size="24.00" fill="#a0a0a0">12:00</text>
<text x="721.51" y="757.70" font-size="24.00" fill="#a0a0a0">15:00</text>
<text x="837.95" y="757.70" font-size="24.00" fill="#a0a0a0">18:00</text>
<text x="954.63" y="757.70" font-size="24.00" fill="#a0a0a0">21:00</text>
<text x="95.40" y="969.75" font-size="24.00" fill="#a0a0a0">1,8</text>
<text x="95.40" y="1026.80" font-size="24.00" fill="#a0a0a0">1,6</text>
<text x="95.16" y="1083.85" font-size="24.00" fill="#a0a0a0">1,4</text>
<text x="95.64" y="1140.90" font-size="24.00" fill="#a0a0a0">1,2</text>
<text x="112.36" y="1197.95" font-size="24.00" fill="#a0a0a0">1</text>
<text x="95.40" y="1255.00" font-size="24.00" fill="#a0a0a0">0,8</text>
<text x="95.40" y="1312.05" font-size="24.00" fill="#a0a0a0">0,6</text>
<text x="95.16" y="1369.10" font-size="24.00" fill="#a0a0a0">0,4</text>
<text x="95.64" y="1426.15" font-size="24.00" fill="#a0a0a0">0,2</text>
<text x="115.42" y="1483.20" font-size="24.00" fill="#a0a0a0">0</text>
<text x="139.79" y="1519.00" font-size="24.00" fill="#a0a0a0">00:00</text>
<text x="256.10" y="1519.00" font-size="24.00" fill="#a0a0a0">03:00</text>
<text x="372.41" y="1519.00" font-size="24.00" fill="#a0a0a0">06:00</text>
<text x="488.72" y="1519.00" font-size="24.00" fill="#a0a0a0">09:00</text>
<text x="604.55" y="1519.00" font-size="24.00" fill="#a0a0a0">12:00</text>
<text x="720.86" y="1519.00" font-size="24.00" fill="#a0a0a0">15:00</text>
<text x="837.17" y="1519.00" font-size="24.00" fill="#a0a0a0">18:00</text>
<text x="953.72" y="1519.00" font-size="24.00" fill="#a0a0a0">21:00</text>
</svg></body></html>
